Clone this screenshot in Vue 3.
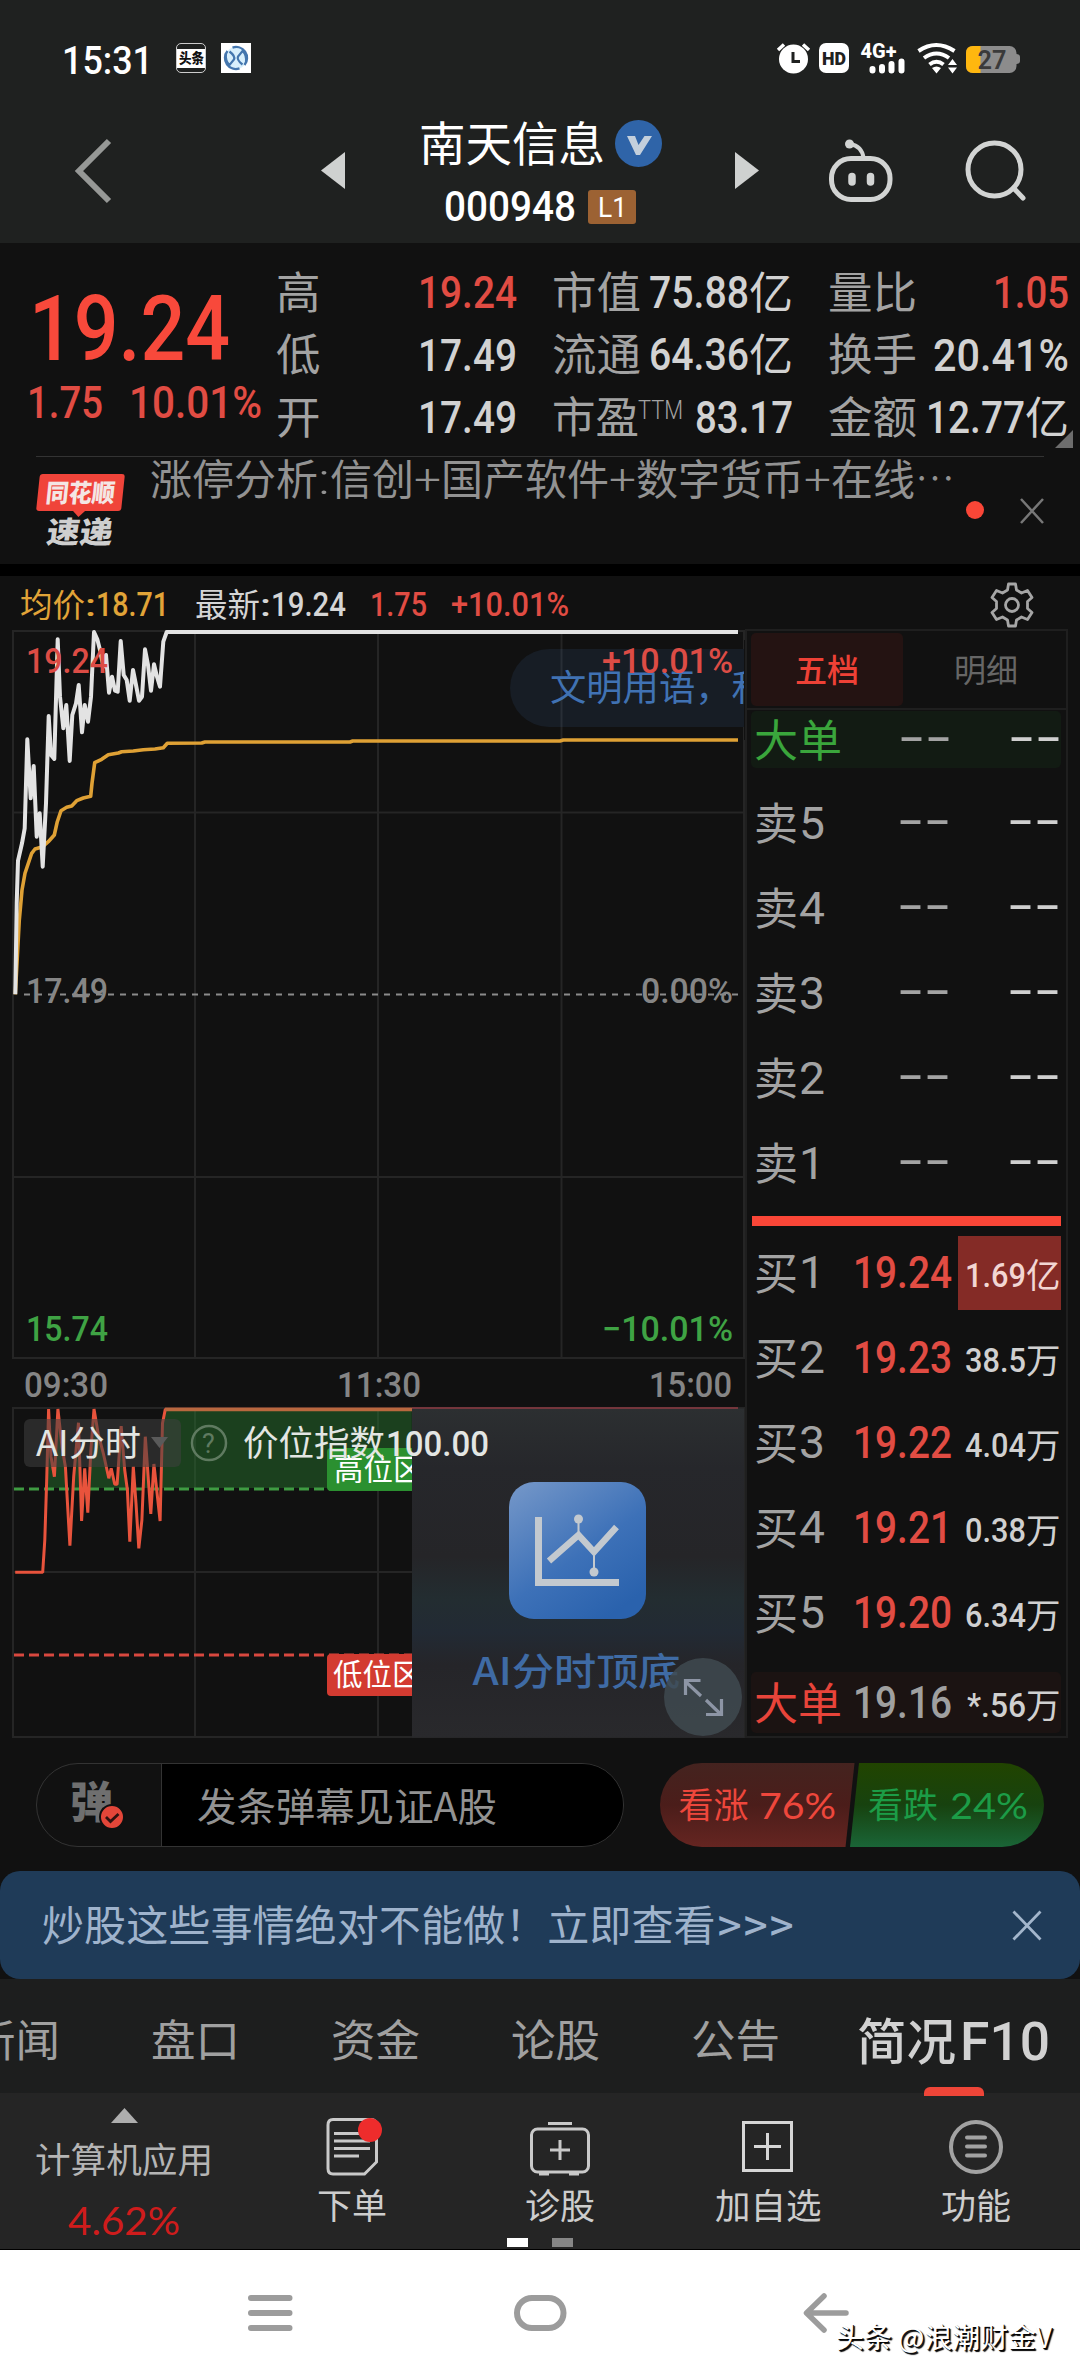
<script setup>
import { h } from 'vue'

// One line of text set to a known width; latin boxes hug the cap height, CJK boxes the em square.
const T = (props) => {
  const t = String(props.t)
  const s = Number(props.s)
  const cjk = /[\u2e80-\uffef]/.test(t)
  const dash = t === '--'
  const w = props.w ? Number(props.w) : t.length * s
  const height = cjk ? s : s * 0.711
  const y = dash ? height / 2 + s * 0.276 : cjk ? s * 0.88 : height
  return h('svg', { class: ['t', { cjk, dash }], width: w, height, 'aria-label': t }, [
    h('text', { x: 0, y, 'font-size': s, textLength: w, lengthAdjust: 'spacingAndGlyphs' }, t),
  ])
}
T.props = ['t', 's', 'w']

const sells = ['卖5', '卖4', '卖3', '卖2', '卖1']
const buys = [
  { n: 1, price: '19.24', vol: '1.69', unit: '亿', hot: true },
  { n: 2, price: '19.23', vol: '38.5', unit: '万' },
  { n: 3, price: '19.22', vol: '4.04', unit: '万' },
  { n: 4, price: '19.21', vol: '0.38', unit: '万' },
  { n: 5, price: '19.20', vol: '6.34', unit: '万' },
]
const tabs = ['新闻', '盘口', '资金', '论股', '公告']

const toPath = (pts, kx, dy) => pts.map(([x, y]) => `${(x / kx).toFixed(1)},${(y / 3 + dy).toFixed(1)}`).join(' ')

const priceLine = toPath([[46,1273],[50,1000],[54,872],[66,820],[74,775],[82,508],[92,685],[101,588],[110,800],[119,730],[128,890],[138,700],[146,438],[153,555],[163,567],[173,208],[180,380],[190,475],[199,405],[209,573],[217,435],[228,400],[236,345],[246,487],[254,405],[264,455],[273,380],[282,186],[292,208],[300,240],[310,290],[318,255],[327,368],[336,320],[345,362],[353,365],[362,213],[371,315],[380,330],[389,392],[399,300],[408,345],[417,392],[426,380],[435,238],[444,285],[453,362],[462,283],[471,320],[480,350],[490,215],[500,186],[2214,186]], 3, 570)
const avgLine = toPath([[46,1273],[58,1050],[66,960],[75,910],[95,850],[105,837],[128,830],[145,815],[163,795],[172,755],[183,722],[200,712],[215,708],[230,692],[250,684],[272,679],[276,640],[284,578],[305,568],[325,554],[355,549],[365,545],[400,543],[430,539],[465,537],[490,533],[502,520],[605,519],[615,516],[1050,516],[1058,513],[1680,513],[1690,510],[2214,510]], 3, 570)
const aiPts = [[44,847],[124,847],[130,750],[136,560],[141,357],[148,500],[158,560],[168,357],[180,470],[190,530],[203,767],[214,560],[228,398],[237,693],[246,535],[255,668],[264,480],[273,357],[285,430],[300,490],[316,565],[323,535],[333,583],[340,583],[352,408],[362,540],[370,600],[377,755],[387,530],[395,640],[403,775],[412,690],[422,440],[438,672],[447,522],[465,693],[472,400],[480,358],[1196,358]]
const aiLine = toPath(aiPts, 2.904, 1290)
const aiArea = toPath([...aiPts, [1196, 847]], 2.904, 1290)
</script>

<template>
  <div class="screen">
    <header class="top">
      <div class="status">
        <T t="15:31" s="39" w="91" class="clock" />
        <div class="tt"><T t="头条" s="13.5" w="25" /></div>
        <svg class="xapp" width="30" height="30" viewBox="0 0 30 30">
          <rect width="30" height="30" fill="#fff" />
          <circle cx="15" cy="15" r="11" fill="#d8effc" />
          <path d="M11.500 4.600A11 11 0 0 1 23.500 22M18.500 25.400A11 11 0 0 1 6.500 8" fill="none" stroke="#4476ae" stroke-width="2.400" />
          <path d="M5 10q-1 8 3.500 12L13 16.500q1.500-3.500-4.500-8M25 20q1-8-3.500-12L17 13.500q-1.500 3.500 4.500 8" fill="none" stroke="#4476ae" stroke-width="2.200" />
        </svg>
        <svg class="sys" width="246" height="34" viewBox="776 41 246 34">
          <circle cx="793.5" cy="59" r="14.5" fill="#fff" />
          <path d="M778 50l6-5.500M809 50l-6-5.500" stroke="#fff" stroke-width="3.500" />
          <path d="M793 52v9.500h7" fill="none" stroke="#1f2120" stroke-width="3" />
          <rect x="819" y="43" width="30" height="30" rx="7" fill="#fff" />
          <text x="822" y="65" font-size="18" font-weight="900" textLength="24" lengthAdjust="spacingAndGlyphs" fill="#1f2120">HD</text>
          <text x="860.500" y="57.500" font-size="19.500" font-weight="800" textLength="36" lengthAdjust="spacingAndGlyphs" fill="#fff">4G+</text>
          <path d="M872.500 69v1.500M882 67v3.500M891.500 64v6.500M901.500 61.500v9" stroke="#fff" stroke-width="6" stroke-linecap="round" />
          <g fill="none" stroke="#fff" stroke-width="4">
            <path d="M918.500 51q17.500-12 36 0" /><path d="M924 58q12.500-9 25 0" /><path d="M929.500 64.500q7-5.500 14 0" />
          </g>
          <path d="M932 68q4.500-3 9 0l-4.500 5.500zM948 65l4.500-6 4.500 6zM948 67.500l4.500 6 4.500-6z" fill="#fff" />
          <rect x="966" y="46" width="50.500" height="27" rx="7" fill="#8c8c8c" />
          <path d="M973 46h7.500v27H973q-7 0-7-7V53q0-7 7-7z" fill="#ffb70f" />
          <path d="M1016 54q4 0 4 3v4q0 3-4 3z" fill="#8c8c8c" />
          <text x="977.500" y="68.500" font-size="25" font-weight="600" textLength="29" lengthAdjust="spacingAndGlyphs" fill="#3a3a3a">27</text>
        </svg>
      </div>
      <div class="nav">
        <svg class="back" width="40" height="68" viewBox="0 0 40 68"><path d="M36 4L6 34l30 30" fill="none" stroke="#969896" stroke-width="6" /></svg>
        <svg class="prev" width="24" height="37" viewBox="0 0 24 37"><path d="M24 0v37L0 18.500z" fill="#cfd1d0" /></svg>
        <div class="title">
          <div class="line">
            <T t="南天信息" s="46.500" />
            <svg width="47" height="47" viewBox="0 0 47 47"><circle cx="23.500" cy="23.500" r="23.500" fill="#2f64a8" /><path d="M12 16h8l3.500 9 6-9h7.500L25 35h-4z" fill="#c3cfdc" /></svg>
          </div>
          <div class="line code">
            <T t="000948" s="42.500" w="132" />
            <div class="l1"><T t="L1" s="28" w="29" /></div>
          </div>
        </div>
        <svg class="next" width="24" height="37" viewBox="0 0 24 37"><path d="M0 0v37l24-18.500z" fill="#cfd1d0" /></svg>
        <svg class="robot" width="66" height="66" viewBox="828 139 66 66" fill="none" stroke="#d2d4d3" stroke-width="5">
          <rect x="831.500" y="159.500" width="58.500" height="41" rx="19.500" />
          <path d="M850 145q12 2 13.500 14" stroke-width="4" />
          <circle cx="849.500" cy="145" r="4.500" fill="#d2d4d3" stroke="none" />
          <path d="M852 177.500v5.500M870.500 177.500v5.500" stroke-width="7.500" stroke-linecap="round" />
        </svg>
        <svg class="search" width="62" height="62" viewBox="965 140 62 62" fill="none" stroke="#d2d4d3" stroke-width="5">
          <circle cx="994.500" cy="169.500" r="26.500" /><path d="M1013.500 188l9.500 10" stroke-linecap="round" />
        </svg>
      </div>
    </header>

    <section class="quote">
      <div class="stats">
        <div class="last">
          <T t="19.24" s="91" w="201" class="big" />
          <div class="chg"><T t="1.75" s="45" w="76" /><T t="10.01%" s="45" w="133" /></div>
        </div>
        <div class="col">
          <div class="row"><T t="高" s="44.500" /><T t="19.24" s="45" w="99" class="up" /></div>
          <div class="row"><T t="低" s="44.500" /><T t="17.49" s="45" w="99" class="v" /></div>
          <div class="row"><T t="开" s="44.500" /><T t="17.49" s="45" w="99" class="v" /></div>
        </div>
        <div class="col">
          <div class="row"><T t="市值" s="44.500" /><span class="pair v"><T t="75.88" s="45" w="100" /><T t="亿" s="44" /></span></div>
          <div class="row"><T t="流通" s="44.500" /><span class="pair v"><T t="64.36" s="45" w="100" /><T t="亿" s="44" /></span></div>
          <div class="row"><span class="pair"><T t="市盈" s="43.500" /><T t="TTM" s="25" w="45" class="ttm" /></span><T t="83.17" s="45" w="98" class="v" /></div>
        </div>
        <div class="col">
          <div class="row"><T t="量比" s="44.500" /><T t="1.05" s="45" w="76" class="up" /></div>
          <div class="row"><T t="换手" s="44.500" /><T t="20.41%" s="45" w="136" class="v" /></div>
          <div class="row"><T t="金额" s="44.500" /><span class="pair v"><T t="12.77" s="45" w="99" /><T t="亿" s="44" /></span></div>
          <i class="corner"></i>
        </div>
      </div>
      <div class="news">
        <div class="brand">
          <div class="bubble"><T t="同花顺" s="25" w="69" /></div>
          <T t="速递" s="30" w="66" class="express" />
        </div>
        <div class="headline">
          <T t="涨停分析" s="42" /><T t=":" s="42" w="12" /><T t="信创" s="42" /><T t="+" s="42" w="27" /><T t="国产软件" s="42" /><T t="+" s="42" w="27" /><T t="数字货币" s="42" /><T t="+" s="42" w="27" /><T t="在线" s="42" /><T t="⋯" s="42" w="40" />
        </div>
        <i class="dot"></i>
        <svg class="close" width="24" height="26" viewBox="0 0 24 26"><path d="M1 1l22 24M23 1L1 25" stroke="#777" stroke-width="2.500" /></svg>
      </div>
    </section>

    <section class="market">
      <div class="legend">
        <span class="pair avg"><T t="均价" s="32.500" /><T t=":" s="32" w="11" /><T t="18.71" s="33" w="73" /></span>
        <span class="pair now"><T t="最新" s="32.500" /><T t=":" s="32" w="11" /><T t="19.24" s="33" w="75" /></span>
        <T t="1.75" s="33" w="57" class="up c1" />
        <T t="+10.01%" s="33" w="118" class="up c2" />
        <svg class="gear" width="46" height="46" viewBox="0 0 46 46" fill="none" stroke="#a6a6a6" stroke-width="2.800" stroke-linejoin="round">
          <path d="M19.500 2h7l1 6 5 3 6-2.500 4.500 7-4.500 4v7l4.500 4-4.500 7-6-2.500-5 3-1 6h-7l-1-6-5-3-6 2.500-4.500-7 4.500-4v-7l-4.500-4 4.500-7 6 2.500 5-3z" /><circle cx="23" cy="23" r="6.500" />
        </svg>
      </div>
      <div class="board">
        <svg class="chart" width="745" height="1109" viewBox="0 629 745 1109">
          <defs>
            <clipPath id="hi"><rect x="0" y="1400" width="412" height="88" /></clipPath>
            <clipPath id="left"><rect x="0" y="1400" width="412" height="340" /></clipPath>
            <linearGradient id="blue" x1="0" y1="0" x2="0.700" y2="1"><stop offset="0" stop-color="#7698c9" /><stop offset="0.600" stop-color="#3d71b8" /><stop offset="1" stop-color="#2a62ad" /></linearGradient>
            <linearGradient id="promo" x1="0" y1="0" x2="0" y2="1"><stop offset="0" stop-color="#2c2f31" /><stop offset="0.180" stop-color="#26272b" /><stop offset="0.450" stop-color="#252528" /><stop offset="0.580" stop-color="#232d31" /><stop offset="0.680" stop-color="#222a34" /><stop offset="0.780" stop-color="#252529" /><stop offset="1" stop-color="#29292c" /></linearGradient>
          </defs>
          <g fill="none" stroke="#252525" stroke-width="2">
            <path d="M13 631H744V1358H13zM13 812.500H744M13 1177H744M195 631V1358M378 631V1358M561.500 631V1358" />
            <path d="M13 1408H744V1737H13zM13 1572H744M195 1408V1737M378 1408V1737" />
          </g>
          <path d="M744 649V727H549a39 39 0 0 1 0-78z" fill="#171d25" />
          <path d="M561.500 649V727" stroke="#282e36" stroke-width="2" />
          <path d="M24 994.500H738" stroke="#8b8b8b" stroke-width="2" stroke-dasharray="6 6" />
          <polyline :points="avgLine" fill="none" stroke="#dfa135" stroke-width="3.600" stroke-linejoin="round" />
          <polyline :points="priceLine" fill="none" stroke="#e3e3e3" stroke-width="4" stroke-linejoin="round" />
          <text class="k" x="550" y="701" font-size="36.300" fill="#4072b3">文明用语，和</text>
          <rect x="744" y="640" width="2" height="100" fill="#111" />
          <g font-size="34.500" font-weight="500">
            <text x="26" y="673" textLength="82" lengthAdjust="spacingAndGlyphs" fill="#dc4c45">19.24</text>
            <text x="602" y="673" textLength="131" lengthAdjust="spacingAndGlyphs" fill="#dc4c45">+10.01%</text>
            <text x="26" y="1003" textLength="82" lengthAdjust="spacingAndGlyphs" fill="#868686">17.49</text>
            <text x="641" y="1003" textLength="92" lengthAdjust="spacingAndGlyphs" fill="#868686">0.00%</text>
            <text x="26" y="1341" textLength="82" lengthAdjust="spacingAndGlyphs" fill="#3fa344">15.74</text>
            <text x="602" y="1340.500" textLength="131" lengthAdjust="spacingAndGlyphs" fill="#3fa344">−10.01%</text>
            <g fill="#858585">
              <text x="24" y="1396.500" textLength="84" lengthAdjust="spacingAndGlyphs">09:30</text>
              <text x="337" y="1396.500" textLength="84" lengthAdjust="spacingAndGlyphs">11:30</text>
              <text x="649" y="1396.500" textLength="83" lengthAdjust="spacingAndGlyphs">15:00</text>
            </g>
          </g>

          <polygon :points="aiArea" fill="#1b401e" clip-path="url(#hi)" />
          <path d="M195 1411V1489M378 1411V1489" stroke="#264a29" stroke-width="2" />
          <path d="M14 1489H412" stroke="#3f9a42" stroke-width="3" stroke-dasharray="10 5" />
          <path d="M14 1655H412" stroke="#d8483f" stroke-width="3" stroke-dasharray="10 5" />
          <polyline :points="aiLine" fill="none" stroke="#e8533c" stroke-width="3" stroke-linejoin="bevel" />
          <path d="M165 1409.500H412" stroke="#b9683f" stroke-width="3.500" />
          <g clip-path="url(#left)">
            <rect x="327" y="1448" width="95" height="43" rx="4" fill="#2b9030" />
            <rect x="327" y="1654" width="95" height="42" rx="4" fill="#d33b31" />
            <g class="k" font-size="29.500" fill="#fff">
              <text x="334" y="1480">高位区</text>
              <text x="333" y="1684.500">低位区</text>
            </g>
          </g>
          <rect x="412" y="1408.500" width="332" height="329" fill="url(#promo)" />
          <path d="M412 1408H738" stroke="#8f3d45" stroke-width="1.500" />
          <rect x="509" y="1482" width="137" height="137" rx="25" fill="url(#blue)" />
          <g fill="none" stroke="#c3c9cf" stroke-width="7">
            <path d="M538.500 1517V1582.500H619" />
            <path d="M549 1561l29.500-26 15.500 17 22.500-25" stroke-width="6.500" />
            <path d="M578.500 1519v15M594 1552v20" stroke-width="2" />
          </g>
          <g fill="#c3c9cf"><circle cx="578.500" cy="1519" r="4.500" /><circle cx="594" cy="1572" r="4.500" /></g>
          <text class="k mid" x="472.500" y="1685" font-size="38" textLength="208" lengthAdjust="spacingAndGlyphs" fill="#3f6ba5">AI分时顶底</text>
          <circle cx="703" cy="1697" r="39" fill="#404a50" fill-opacity="0.850" />
          <path d="M701 1696l-15-14M685.500 1695v-14.500h15M706 1700l14 13.500M721.500 1699v15.500h-15.500" fill="none" stroke="#8d95a5" stroke-width="3.200" />
          <rect x="24" y="1419" width="157" height="48" rx="6" fill="#404040" fill-opacity="0.550" />
          <path d="M151 1437h17l-8.500 11z" fill="#5a5a5a" />
          <circle cx="209" cy="1443" r="17" fill="none" stroke="#5f7a60" stroke-width="2.500" />
          <text x="202" y="1452.500" font-size="27" fill="#5f7a60">?</text>
          <g fill="#e3e6e3">
            <text class="k" x="36" y="1456" font-size="35.500" textLength="105" lengthAdjust="spacingAndGlyphs">AI分时</text>
            <text class="k" x="243" y="1456" font-size="35.500">价位指数</text>
            <text x="386" y="1456" font-size="35" font-weight="500" textLength="103" lengthAdjust="spacingAndGlyphs">100.00</text>
          </g>
        </svg>

        <aside class="book">
          <div class="booktabs">
            <div class="on"><T t="五档" s="32" /></div>
            <div><T t="明细" s="32" /></div>
          </div>
          <div class="ask big-ask"><T t="大单" s="44" class="lab" /><T t="--" s="48" w="54" class="d1" /><T t="--" s="48" w="54" class="d2" /></div>
          <div v-for="x in sells" :key="x" class="ask">
            <span class="lab"><T :t="x[0]" s="44" /><T :t="x[1]" s="45" w="26" /></span>
            <T t="--" s="48" w="54" class="d1" /><T t="--" s="48" w="54" class="d2" />
          </div>
          <div class="bar"></div>
          <div v-for="b in buys" :key="b.n" class="bid">
            <span class="lab"><T t="买" s="44" /><T :t="b.n" s="44" w="26" /></span>
            <T :t="b.price" s="44" w="99" class="price" />
            <span class="vol" :class="{ hot: b.hot }"><T :t="b.vol" s="34" w="61" /><T :t="b.unit" s="34.500" /></span>
          </div>
          <div class="bid big-bid">
            <T t="大单" s="44" class="lab" />
            <T t="19.16" s="44" w="99" class="price" />
            <span class="vol"><T t="*.56" s="34" w="59" /><T t="万" s="34.500" /></span>
          </div>
        </aside>
      </div>

      <div class="danmu">
        <div class="input">
          <div class="toggle">
            <T t="弹" s="43" />
            <svg class="tick" width="26" height="26" viewBox="0 0 26 26"><circle cx="13" cy="13" r="12" fill="#e34639" stroke="#111" stroke-width="2" /><path d="M7 13l4.500 4.500 8-7.500" fill="none" stroke="#301210" stroke-width="2.800" /></svg>
          </div>
          <div class="field"><T t="发条弹幕见证A股" s="39" w="300" /></div>
        </div>
        <svg class="vote" width="384" height="84" viewBox="660 1763 384 84">
          <defs>
            <linearGradient id="vr" x1="0" y1="0" x2="0" y2="1"><stop offset="0" stop-color="#44231f" /><stop offset="0.500" stop-color="#4b1d1a" /><stop offset="1" stop-color="#652521" /></linearGradient>
            <linearGradient id="vg" x1="0" y1="0" x2="0" y2="1"><stop offset="0" stop-color="#214400" /><stop offset="0.500" stop-color="#17420f" /><stop offset="1" stop-color="#1a6537" /></linearGradient>
          </defs>
          <path d="M702 1763H854.500L845.500 1847H702a42 42 0 0 1 0-84z" fill="url(#vr)" />
          <path d="M859 1763H1002a42 42 0 0 1 0 84H850z" fill="url(#vg)" />
          <g fill="#ee473c">
            <text class="k" x="678.500" y="1817.500" font-size="35">看涨</text>
            <text class="la" x="759" y="1819" font-size="37.500" textLength="77" lengthAdjust="spacingAndGlyphs">76%</text>
          </g>
          <g fill="#1c9c47">
            <text class="k" x="868" y="1817.500" font-size="35">看跌</text>
            <text class="la" x="950" y="1819" font-size="37.500" textLength="78" lengthAdjust="spacingAndGlyphs">24%</text>
          </g>
        </svg>
      </div>

      <div class="banner">
        <T t="炒股这些事情绝对不能做！立即查看" s="42.100" /><T t=">>>" s="44" w="78" />
        <svg class="x" width="30" height="31" viewBox="0 0 30 31"><path d="M1.500 1.500l27 28M28.500 1.500l-27 28" stroke="#a3b6cc" stroke-width="2.800" /></svg>
      </div>
    </section>

    <nav class="tabs">
      <div v-for="x in tabs" :key="x" class="tab"><T :t="x" s="44.500" /></div>
      <div class="tab cur"><T t="简况" s="49.500" /><T t="F10" s="54" w="90" /><i></i></div>
    </nav>

    <footer class="foot">
      <div class="sector">
        <svg width="27" height="15" viewBox="0 0 27 15"><path d="M0 15L13.500 0 27 15z" fill="#aeaeae" /></svg>
        <T t="计算机应用" s="35.600" />
        <T t="4.62%" s="38" w="112" class="pct" />
      </div>
      <div class="act">
        <svg width="64" height="64" viewBox="320 2114 64 64" fill="none" stroke="#c9c9c9" stroke-width="3">
          <path d="M333 2119.500H371q5.500 0 5.500 6V2162l-12 12H333q-5 0-5-5.500V2125q0-5.500 5-5.500z" />
          <path d="M334 2133.500H360M334 2141H370M334 2148.500H370M334 2156H359" />
          <circle cx="370" cy="2130" r="12" fill="#ee2c2c" stroke="none" />
        </svg>
        <T t="下单" s="35" />
      </div>
      <div class="act">
        <svg width="64" height="64" viewBox="528 2114 64 64" fill="none" stroke="#c9c9c9" stroke-width="3">
          <rect x="531.500" y="2129" width="57" height="43" rx="6" />
          <path d="M548 2123.500H572M539 2174H549M569 2174H579M550 2150H570M560 2140V2160" />
        </svg>
        <T t="诊股" s="35" />
      </div>
      <div class="act">
        <svg width="64" height="64" viewBox="736 2114 64 64" fill="none" stroke="#d6d6d6" stroke-width="3">
          <rect x="743.500" y="2122.500" width="48" height="48" /><path d="M754 2146.500H781M767.500 2133V2160" />
        </svg>
        <T t="加自选" s="35.500" />
      </div>
      <div class="act">
        <svg width="64" height="64" viewBox="944 2114 64 64" fill="none" stroke="#a2a2a2" stroke-width="4">
          <circle cx="976" cy="2147" r="25" /><path d="M967 2137.500H985M967 2146.500H985M967 2155.500H985" stroke-linecap="round" />
        </svg>
        <T t="功能" s="35" />
      </div>
      <div class="pages"><i></i><i></i></div>
    </footer>

    <div class="sysnav">
      <svg width="46" height="42" viewBox="247 2292 46 42" stroke="#9c9c9c" stroke-width="6" stroke-linecap="round"><path d="M251 2298H289.500M251 2313H289.500M251 2328H289.500" /></svg>
      <svg width="54" height="42" viewBox="513 2292 54 42"><rect x="517" y="2298" width="46.500" height="30" rx="15" fill="none" stroke="#9c9c9c" stroke-width="6" /></svg>
      <svg width="46" height="42" viewBox="803 2292 46 42" fill="none" stroke="#9c9c9c" stroke-width="5.500" stroke-linecap="round" stroke-linejoin="round"><path d="M846 2313H807M824 2296l-17.500 17 17.500 17" /></svg>
      <div class="mark">头条 @浪潮财金V</div>
    </div>
  </div>
</template>

<style>
body { background: #111; }
svg text { font-family: Roboto, "Noto Sans CJK SC", sans-serif; }
svg.t { display: block; flex: none; overflow: visible; fill: currentColor; }
svg.t.cjk text, svg text.k, svg .k text { font-family: "Noto Sans CJK SC", sans-serif; font-weight: 400; }
svg text.k.mid { font-weight: 500; }
svg.t.dash text { font-family: "Liberation Sans", sans-serif; font-weight: 400; }
svg text.la { font-family: Lato, sans-serif; }
</style>

<style scoped>
.screen { width: 1080px; height: 2376px; overflow: hidden; background: #111; color: #a3a3a3; font-family: Roboto, "Noto Sans CJK SC", sans-serif; }
.screen svg { flex: none; display: block; }
.pair { display: flex; align-items: center; }

.top { height: 243px; background: #1f2120; }
.status { display: flex; align-items: center; height: 82px; padding: 34px 0 0 62px; box-sizing: border-box; color: #fff; }
.status .clock { margin-top: 4px; font-weight: 500; }
.tt { width: 28px; height: 28px; margin-left: 23px; border: 1px solid #ccc; border-radius: 5px; background: linear-gradient(#1f2120 5px, #fff 5px, #fff 24px, #1f2120 24px); display: flex; align-items: center; justify-content: center; color: #111; }
.tt :deep(text), .toggle :deep(text) { font-weight: 900 !important; }
.xapp { margin-left: 15px; }
.sys { margin-left: 525px; }
.nav { display: flex; align-items: center; height: 161px; padding-left: 73px; }
.nav > svg { margin-top: 16px; }
.prev { margin-left: 208px; }
.title { width: 244px; margin-left: 74px; }
.title .line { display: flex; align-items: center; gap: 10px; color: #fff; height: 47px; margin-top: 19px; }
.title .code { margin: 22px 0 0 25px; gap: 12px; height: 36px; font-weight: 500; }
.l1 { display: flex; align-items: center; justify-content: center; width: 48px; height: 34px; border-radius: 3px; background: #9c6233; font-weight: 400; }
.next { margin-left: 72px; }
.robot { margin-left: 69px; }
.search { margin-left: 71px; }

.quote { height: 321px; background: #111; font-weight: 500; }
.stats { display: flex; height: 213px; padding-top: 18px; box-sizing: border-box; }
.last { width: 276px; color: #f8493b; padding-top: 34px; box-sizing: border-box; }
.last .big { margin-left: 29px; }
.chg { display: flex; gap: 26px; margin: 26px 0 0 27px; color: #e14c43; }
.col { position: relative; width: 241px; height: 187px; display: flex; flex-direction: column; }
.col + .col { margin-left: 35px; }
.row { flex: 1; display: flex; align-items: center; justify-content: space-between; }
.v { color: #d2d2d2; }
.up { color: #e14c43; }
.ttm { margin: -14px 0 0 -1px; font-weight: 300; }
.corner { position: absolute; right: -4px; bottom: 0; border: 9px solid transparent; border-right-color: #6d6d6d; border-bottom-color: #6d6d6d; }
.news { display: flex; align-items: flex-start; height: 107px; margin: 0 36px; border-top: 1px solid #333; }
.brand { width: 89px; padding-top: 17px; }
.bubble { position: relative; width: 85px; height: 37px; margin-left: 2px; border-radius: 3px; transform: skewX(-6deg); background: #f0443a; color: #f4e6e4; display: flex; align-items: center; justify-content: center; }
.bubble::after { content: ""; position: absolute; left: 37px; top: 37px; border: 6px solid transparent; border-top-color: #f0443a; border-bottom: 0; }
.brand :deep(text) { font-weight: 900 !important; }
.express { margin: 6px 0 0 11px; color: #cfcfcf; transform: skewX(-8deg); }
.headline { display: flex; align-items: center; width: 815px; margin: 1px 0 0 25px; color: #929292; font-weight: 300; }
.dot { width: 18px; height: 18px; border-radius: 50%; background: #fa4637; margin: 44px 0 0 1px; flex: none; }
.close { margin: 41px 0 0 36px; }

.market { border-top: 12px solid #000; background: #111; }
.legend { display: flex; align-items: center; height: 53px; padding: 4px 0 0 20px; box-sizing: border-box; font-weight: 500; }
.avg { color: #e1a438; }
.now { color: #d5d5d5; margin-left: 26px; }
.c1 { margin-left: 24px; }
.c2 { margin-left: 24px; }
.gear { margin-left: 420px; }
.board { display: flex; height: 1109px; }
.book { width: 323px; height: 1109px; box-sizing: border-box; border: 2px solid #1f1f1f; padding: 0 5px 0 4px; }
.booktabs { display: flex; height: 77px; margin: 0 -5px 0 -4px; border-bottom: 2px solid #1f1f1f; color: #666; }
.booktabs div { flex: 1; display: flex; align-items: center; justify-content: center; margin: 2px 4px; border-radius: 5px; }
.booktabs .on { background: #241312; color: #ee4136; }
.booktabs .on :deep(text) { font-weight: 500; }
.ask, .bid { display: flex; align-items: center; height: 85px; }
.lab { display: flex; align-items: center; width: 87px; margin-left: 3px; font-weight: 400; gap: 1px; }
.big-ask { height: 57px; margin: 1px 0 12px; background: #121b13; border-radius: 5px; }
.big-ask > .lab, .big-bid > .lab { width: 88px; margin-right: -1px; }
.big-ask > .lab { color: #3aa63c; }
.d1 { margin-left: 57px; }
.d2 { margin-left: 56px; color: #cfcfcf; }
.bar { height: 10px; margin: 11px 0 4px 1px; background: #fa4637; }
.price { margin-left: 12px; color: #e14c43; font-weight: 500; }
.vol { display: flex; align-items: center; justify-content: flex-end; width: 104px; height: 74px; padding: 6px 1px 0 0; box-sizing: border-box; margin-left: 6px; color: #d0d0d0; font-weight: 500; }
.hot { background: #842b26; color: #f2d6d3; }
.big-bid { height: 61px; margin-top: 17px; background: #1b1312; border-radius: 5px; }
.big-bid > .lab { color: #e8443a; }
.big-bid .price { color: #a0a0a0; }

.danmu { display: flex; align-items: center; height: 133px; padding-left: 36px; }
.input { display: flex; width: 588px; height: 84px; box-sizing: border-box; border: 1px solid #333; border-radius: 42px; overflow: hidden; }
.toggle { position: relative; width: 124px; border-right: 1px solid #333; color: #6f6f6f; }
.toggle > .t { margin: 16px 0 0 33px; }
.tick { position: absolute; left: 62px; top: 40px; }
.field { flex: 1; background: #000; padding: 23px 0 0 35px; color: #929292; }
.vote { margin-left: 36px; }
.banner { display: flex; align-items: center; height: 108px; border-radius: 20px; background: #1f3b58; color: #9fb3cc; padding-left: 42px; }
.banner .x { margin-left: 218px; }

.tabs { display: flex; height: 114px; background: #1d1e1e; color: #a0a0a0; margin-left: -29px; }
.tab { width: 180px; flex: none; padding-top: 39px; box-sizing: border-box; }
.cur { position: relative; display: flex; width: 200px; gap: 4px; padding: 0 0 0 6px; margin-left: -20px; height: 124px; align-items: center; color: #d1d1d1; font-weight: 600; box-sizing: border-box; }
.cur :deep(text) { font-weight: 500 !important; }
.cur i { position: absolute; left: 73px; top: 108px; width: 60px; height: 9px; border-radius: 6px 6px 0 0; background: #ee4538; z-index: 1; }
.foot { position: relative; display: flex; height: 156px; background: #252525; border-bottom: 1px solid #000; color: #cdcdcd; }
.sector { width: 248px; display: flex; flex-direction: column; align-items: center; color: #b5b5b5; padding-top: 15px; box-sizing: border-box; }
.sector > .t { margin-top: 19px; }
.sector .pct { color: #cf1c1c; margin-top: 30px; font-weight: 400; }
.sector .pct :deep(text) { font-family: Lato, sans-serif; }
.act { width: 208px; display: flex; flex-direction: column; align-items: center; gap: 10px; padding-top: 21px; }
.pages { position: absolute; left: 507px; bottom: 2px; display: flex; gap: 24px; }
.pages i { width: 21px; height: 9px; background: #fff; }
.pages i + i { background: #868686; }
.sysnav { position: relative; display: flex; height: 126px; background: #fff; padding: 42px 0 0 247px; box-sizing: border-box; }
.sysnav svg + svg { margin-left: 220px; }
.sysnav svg + svg + svg { margin-left: 236px; }
.mark { position: absolute; left: 836px; top: 66px; white-space: nowrap; font: 400 27.900px/40px "Noto Sans CJK SC", sans-serif; color: #fff; text-shadow: 2px 2px 1px #000, 1px 1px 0 #222; }
</style>
